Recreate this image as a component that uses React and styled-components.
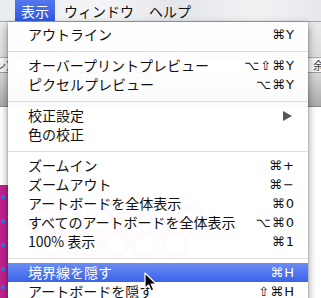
import styled, { createGlobalStyle, css } from 'styled-components';

const GlobalStyle = createGlobalStyle`
  html, body {
    margin: 0;
    padding: 0;
    overflow: hidden;
    background: #ffffff;
  }
  body {
    font-family: "Noto Sans CJK JP", "Noto Sans", sans-serif;
  }
`;

const Screen = styled.div`
  position: relative;
  width: 321px;
  height: 298px;
  overflow: hidden;
  display: flex;
  flex-direction: column;
`;

const MenuBar = styled.div`
  height: 22px;
  display: flex;
  align-items: stretch;
  gap: 3px;
  padding-left: 15px;
  background: linear-gradient(90deg, #e9ecef 0%, #f4f5f7 30%, #e4e7ea 55%, #f1f2f4 80%, #e6e8eb 100%);
  border-bottom: 1px solid #a8aaad;
  box-sizing: border-box;
`;

const MenuTitle = styled.div`
  padding: 0 6px;
  font-size: 14px;
  line-height: 22px;
  color: #111;
  ${(p) =>
    p.$active &&
    css`
      background: linear-gradient(#5377ee, #2f58e0);
      color: #fff;
    `}
`;

const Workspace = styled.div`
  flex: 1;
  display: flex;
  flex-direction: column;
  background: #f4f4f4;
`;

const TopStrip = styled.div`
  height: 35px;
  background: linear-gradient(#e9e9e9, #dcdcdc);
  border-bottom: 1px solid #a9a9a9;
`;

const FieldRow = styled.div`
  height: 14px;
  display: flex;
  justify-content: space-between;
  align-items: center;
  background: #f7f7f7;
  border-bottom: 1px solid #9c9c9c;
  font-size: 11px;
  color: #444;
  overflow: hidden;
`;

const FieldText = styled.span`
  margin: ${(p) => (p.$right ? '0 -14px 0 0' : '0 0 0 -5px')};
  white-space: nowrap;
`;

const ControlStrip = styled.div`
  height: 33px;
  background: linear-gradient(#d9d9d9, #a9a9a9);
  border-bottom: 1px solid #8a8a8a;
`;

const Canvas = styled.div`
  flex: 1;
  display: flex;
  align-items: flex-end;
  background: #ffffff;
`;

const Dropdown = styled.div`
  position: absolute;
  top: 22px;
  left: 8px;
  width: 300px;
  height: 290px;
  padding-top: 3px;
  box-sizing: border-box;
  background: rgba(255, 255, 255, 0.95);
  box-shadow: 0 3px 8px rgba(0, 0, 0, 0.45), 0 0 0 1px rgba(0, 0, 0, 0.08);
`;

const Item = styled.div`
  height: 19px;
  display: flex;
  align-items: center;
  justify-content: space-between;
  padding: 0 13px 0 20px;
  font-size: 14px;
  line-height: 19px;
  color: #111;
  ${(p) =>
    p.$selected &&
    css`
      background: linear-gradient(#6b8cf3, #3a63e9);
      color: #fff;
    `}
`;

const Shortcut = styled.span`
  font-family: "DejaVu Sans", "Noto Sans", sans-serif;
  font-size: 13px;
  letter-spacing: 1px;
`;

const SubArrow = styled.span`
  width: 0;
  height: 0;
  margin-right: 3px;
  border-top: 5px solid transparent;
  border-bottom: 5px solid transparent;
  border-left: 9px solid #555;
`;

const Separator = styled.div`
  height: 12px;
  position: relative;
  &::after {
    content: '';
    position: absolute;
    left: 0;
    right: 0;
    top: 7px;
    height: 1px;
    background: #dedede;
  }
`;

const Cursor = styled.svg`
  position: absolute;
  left: 144px;
  top: 272px;
`;

const sections = [
  [{ label: 'アウトライン', key: '⌘Y' }],
  [
    { label: 'オーバープリントプレビュー', key: '⌥⇧⌘Y' },
    { label: 'ピクセルプレビュー', key: '⌥⌘Y' }
  ],
  [{ label: '校正設定', sub: true }, { label: '色の校正' }],
  [
    { label: 'ズームイン', key: '⌘+' },
    { label: 'ズームアウト', key: '⌘−' },
    { label: 'アートボードを全体表示', key: '⌘0' },
    { label: 'すべてのアートボードを全体表示', key: '⌥⌘0' },
    { label: '100% 表示', key: '⌘1' }
  ],
  [
    { label: '境界線を隠す', key: '⌘H', selected: true },
    { label: 'アートボードを隠す', key: '⇧⌘H' }
  ]
];

function Artwork() {
  // pink pattern with selection handles, mostly hidden under the menu
  return (
    <svg width="220" height="113" viewBox="0 0 220 113">
      <rect x="0" y="0" width="8" height="113" fill="#c2228e" />
      {[10, 34, 58, 82, 100].map((y) => (
        <rect key={y} x="1" y={y} width="4" height="4" fill="#3f6fe6" />
      ))}
      {[0, 1, 2, 3, 4, 5].map((i) => (
        <circle key={i} cx={40 + i * 30} cy="35" r="12" fill="none" stroke="#f2a6d2" strokeWidth="6" />
      ))}
      {[0, 1, 2, 3, 4].map((i) => (
        <circle key={i} cx={55 + i * 30} cy="60" r="12" fill="none" stroke="#f2a6d2" strokeWidth="6" />
      ))}
    </svg>
  );
}

export default function App() {
  return (
    <>
      <GlobalStyle />
      <Screen>
        <MenuBar>
          <MenuTitle $active>表示</MenuTitle>
          <MenuTitle>ウィンドウ</MenuTitle>
          <MenuTitle>ヘルプ</MenuTitle>
        </MenuBar>
        <Workspace>
          <TopStrip />
          <FieldRow>
            <FieldText>ン〉</FieldText>
            <FieldText $right>余白</FieldText>
          </FieldRow>
          <ControlStrip />
          <Canvas>
            <Artwork />
          </Canvas>
        </Workspace>

        <Dropdown>
          {sections.map((group, gi) => (
            <div key={gi}>
              {gi > 0 && <Separator />}
              {group.map((it) => (
                <Item key={it.label} $selected={it.selected}>
                  <span>{it.label}</span>
                  {it.key && <Shortcut>{it.key}</Shortcut>}
                  {it.sub && <SubArrow />}
                </Item>
              ))}
            </div>
          ))}
        </Dropdown>

        <Cursor width="14" height="21" viewBox="0 0 14 21">
          <path
            d="M1 1 L1 16.5 L4.6 13 L7.2 19 L9.8 17.9 L7.3 12 L12.2 12 Z"
            fill="#000"
            stroke="#fff"
            strokeWidth="1.2"
            strokeLinejoin="round"
          />
        </Cursor>
      </Screen>
    </>
  );
}
